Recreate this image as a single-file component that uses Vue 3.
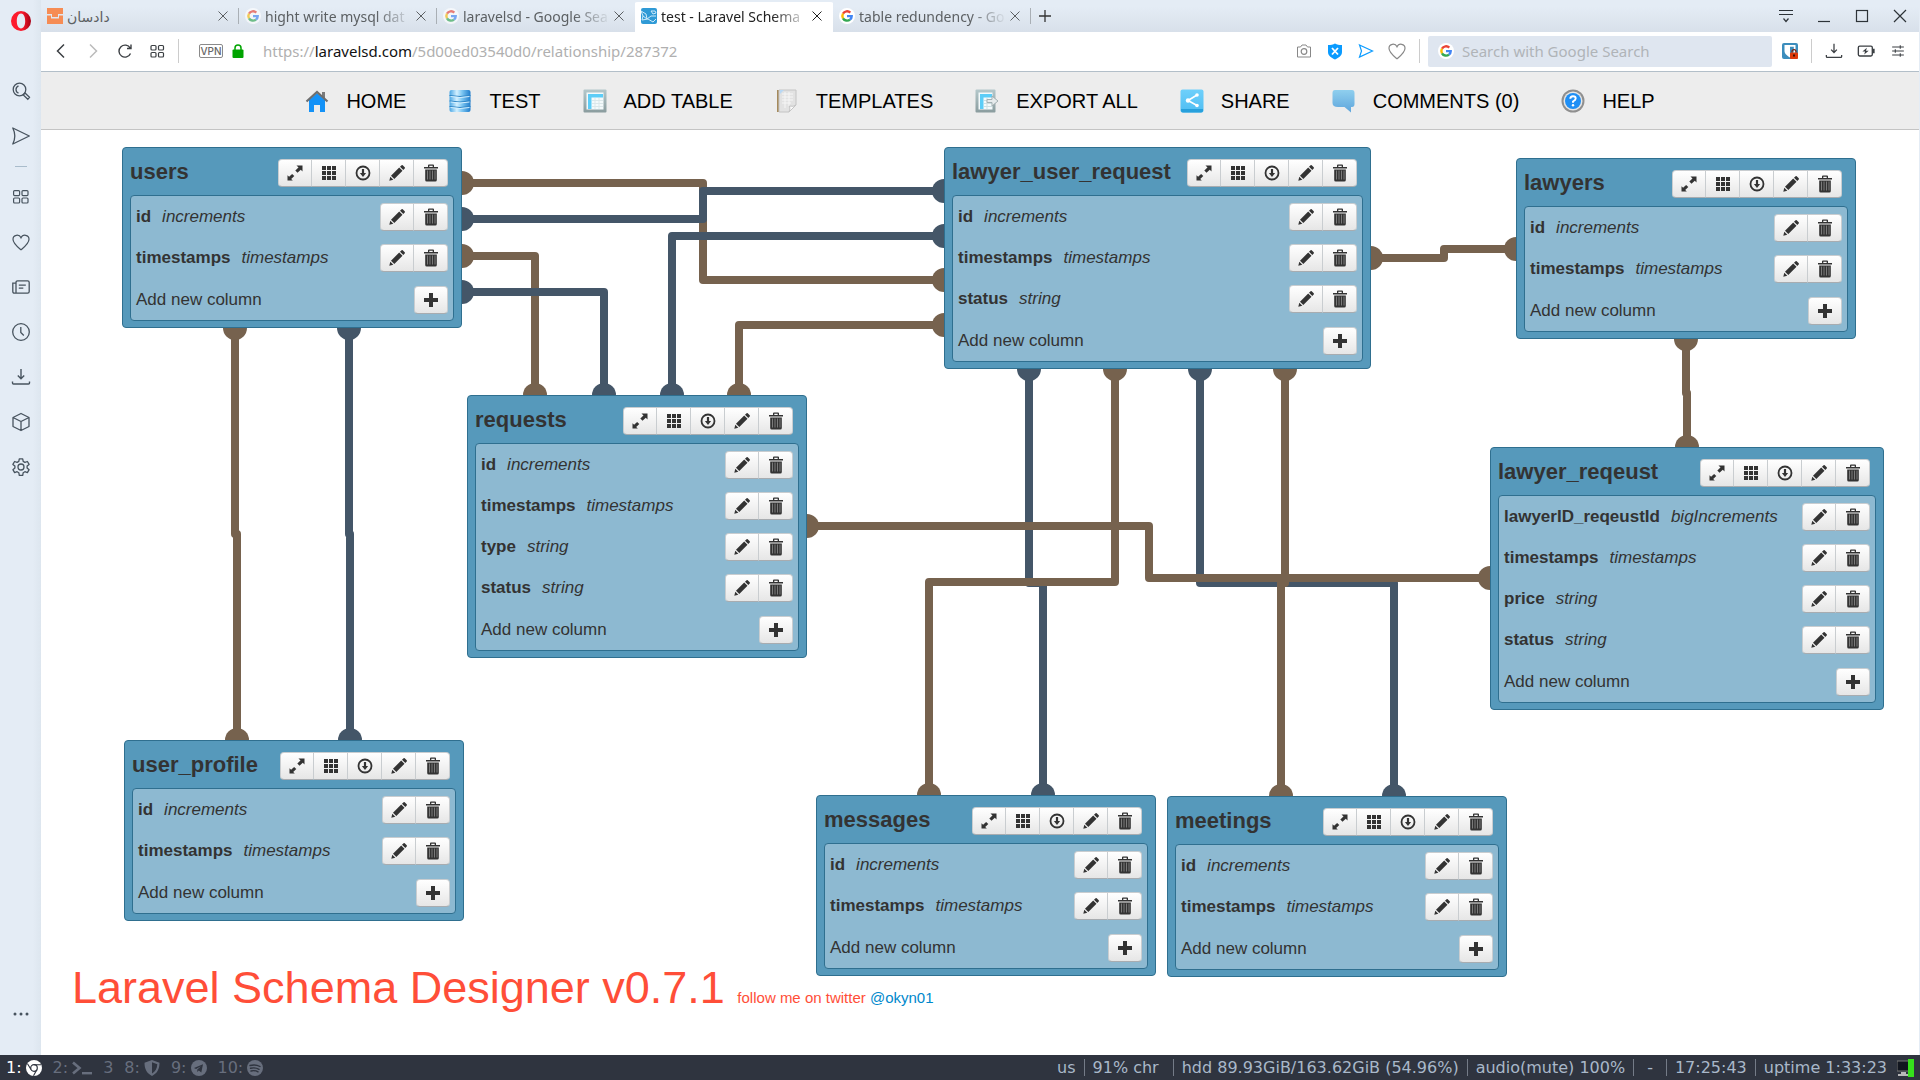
<script setup>
const tabs = [
  { title: 'دادسان', icon: 'brand' },
  { title: 'hight write mysql dat', icon: 'google' },
  { title: 'laravelsd - Google Sea', icon: 'google' },
  { title: 'test - Laravel Schema', icon: 'schema', active: true },
  { title: 'table redundency - Go', icon: 'google', bright: true },
]

const menu = [
  { label: 'HOME', icon: 'home' },
  { label: 'TEST', icon: 'database' },
  { label: 'ADD TABLE', icon: 'sheet' },
  { label: 'TEMPLATES', icon: 'template' },
  { label: 'EXPORT ALL', icon: 'export' },
  { label: 'SHARE', icon: 'share' },
  { label: 'COMMENTS (0)', icon: 'comment' },
  { label: 'HELP', icon: 'help' },
]

const sideTop = ['search', 'send']
const sideMain = ['tiles', 'heart', 'news', 'clock', 'download', 'cube', 'gear']

const id = { name: 'id', type: 'increments' }
const stamps = { name: 'timestamps', type: 'timestamps' }
const status = { name: 'status', type: 'string' }

const tables = [
  { name: 'users', x: 81, y: 17, w: 340, columns: [id, stamps] },
  { name: 'lawyer_user_request', x: 903, y: 17, w: 427, columns: [id, stamps, status] },
  { name: 'lawyers', x: 1475, y: 28, w: 340, columns: [id, stamps] },
  { name: 'requests', x: 426, y: 265, w: 340, columns: [id, stamps, { name: 'type', type: 'string' }, status] },
  {
    name: 'lawyer_reqeust', x: 1449, y: 317, w: 394,
    columns: [{ name: 'lawyerID_reqeustId', type: 'bigIncrements' }, stamps, { name: 'price', type: 'string' }, status],
  },
  { name: 'user_profile', x: 83, y: 610, w: 340, columns: [id, stamps] },
  { name: 'messages', x: 775, y: 665, w: 340, columns: [id, stamps] },
  { name: 'meetings', x: 1126, y: 666, w: 340, columns: [id, stamps] },
]

const BROWN = '#76624e'
const BLUE = '#445668'

const links = [
  { color: BROWN, points: [[421, 53], [662, 53], [662, 150], [903, 150]] },
  { color: BLUE, points: [[421, 89], [662, 89], [662, 61], [903, 61]] },
  { color: BROWN, points: [[421, 126], [494, 126], [494, 265]] },
  { color: BLUE, points: [[421, 162], [563, 162], [563, 265]] },
  { color: BLUE, points: [[903, 106], [631, 106], [631, 265]] },
  { color: BROWN, points: [[903, 195], [698, 195], [698, 265]] },
  { color: BROWN, points: [[194, 198], [194, 404], [196, 404], [196, 610]] },
  { color: BLUE, points: [[308, 198], [308, 404], [309, 404], [309, 610]] },
  { color: BROWN, points: [[1330, 128], [1403, 128], [1403, 119], [1475, 119]] },
  { color: BROWN, points: [[1645, 209], [1645, 263], [1646, 263], [1646, 317]] },
  { color: BLUE, points: [[988, 239], [988, 453], [1002, 453], [1002, 665]] },
  { color: BROWN, points: [[1074, 239], [1074, 452], [888, 452], [888, 665]] },
  { color: BLUE, points: [[1159, 239], [1159, 453], [1353, 453], [1353, 666]] },
  { color: BROWN, points: [[1244, 239], [1244, 453], [1240, 453], [1240, 666]] },
  { color: BROWN, points: [[766, 396], [1108, 396], [1108, 448], [1449, 448]] },
]

const workspaces = [
  { label: '1:', icon: 'chrome', active: true },
  { label: '2:', icon: 'prompt', wide: true },
  { label: '3' },
  { label: '8:', icon: 'shieldhalf' },
  { label: '9:', icon: 'telegram' },
  { label: '10:', icon: 'spotify' },
]

const stats = [
  { text: 'us' },
  { text: '91% chr', kind: 'battery' },
  { text: 'hdd 89.93GiB/163.62GiB (54.96%)' },
  { text: 'audio(mute) 100%' },
  { text: '-', kind: 'blank' },
  { text: '17:25:43' },
  { text: 'uptime 1:33:23' },
]
</script>

<template>
  <svg class="sprites" aria-hidden="true">
    <defs>
      <linearGradient id="g-blue" x1="0" y1="0" x2="1" y2="0">
        <stop offset="0" stop-color="#4aa6e4" /><stop offset=".35" stop-color="#d3f0ff" /><stop offset=".6" stop-color="#7cc6f2" /><stop offset="1" stop-color="#1f7ccb" />
      </linearGradient>
      <linearGradient id="g-frame" x1="0" y1="0" x2="0" y2="1">
        <stop offset="0" stop-color="#b4c8cb" /><stop offset="1" stop-color="#8a9c9e" />
      </linearGradient>
      <linearGradient id="g-share" x1="0" y1="0" x2="0" y2="1">
        <stop offset="0" stop-color="#6fd0fb" /><stop offset="1" stop-color="#4fbdf2" />
      </linearGradient>
      <linearGradient id="g-bubble" x1="0" y1="0" x2="0" y2="1">
        <stop offset="0" stop-color="#8fcfee" /><stop offset="1" stop-color="#5ea5dc" />
      </linearGradient>
      <linearGradient id="g-opera" x1="0" y1="0" x2="1" y2="0">
        <stop offset="0" stop-color="#ff1b2d" /><stop offset=".55" stop-color="#fa1a2c" /><stop offset="1" stop-color="#a70014" />
      </linearGradient>
    </defs>

    <symbol id="i-opera" viewBox="0 0 20 20">
      <path fill="url(#g-opera)" fill-rule="evenodd" d="M10 0a10 10 0 1 0 0 20a10 10 0 0 0 0-20zm0 2.600c2.600 0 4.200 3.200 4.200 7.400s-1.600 7.400-4.200 7.400S5.800 14.200 5.800 10 7.400 2.600 10 2.600z" />
    </symbol>
    <symbol id="i-brand" viewBox="0 0 16 16">
      <path fill="#f68c54" d="M0 0h16v6h-5v3H5V6H0zM0 7.500h4v3h8v-3h4V16H0z" />
    </symbol>
    <symbol id="i-google" viewBox="0 0 16 16">
      <circle cx="8" cy="8" r="8" fill="#fff" />
      <g fill="none" stroke-width="2.400">
        <path stroke="#ea4335" d="M4 5.700A4.700 4.700 0 0 1 11.300 4.600" />
        <path stroke="#fbbc05" d="M4 10.300A4.700 4.700 0 0 1 4 5.700" />
        <path stroke="#34a853" d="M11 11.600A4.700 4.700 0 0 1 4 10.300" />
        <path stroke="#4285f4" d="M8 8.100h4.700A4.700 4.700 0 0 1 11 11.600" />
      </g>
    </symbol>
    <symbol id="i-schema" viewBox="0 0 16 16">
      <rect width="16" height="16" rx="2" fill="#2f9ad6" />
      <path d="M0 3l2 5 4 3-1-5zM2 8l-1 4 6-1 5 3 3-3M6 11l4-3 5 0M10 3l2 3 3-1-1-2z" fill="none" stroke="#cfeafa" />
    </symbol>
    <symbol id="i-close" viewBox="0 0 12 12"><path d="M1.500 1.500l9 9M10.500 1.500l-9 9" fill="none" stroke="currentColor" /></symbol>
    <symbol id="i-plusthin" viewBox="0 0 12 12"><path d="M6 0v12M0 6h12" fill="none" stroke="currentColor" stroke-width="1.300" /></symbol>

    <symbol id="i-tabmenu" viewBox="0 0 20 20"><path d="M3 4.500h14M3 8.500h14M7.500 12.500l2.500 3 2.500-3" fill="none" stroke="currentColor" stroke-width="1.200" /></symbol>
    <symbol id="i-min" viewBox="0 0 20 20"><path d="M4 15.500h12" stroke="currentColor" stroke-width="1.200" /></symbol>
    <symbol id="i-max" viewBox="0 0 20 20"><rect x="4.500" y="4.500" width="11" height="11" fill="none" stroke="currentColor" stroke-width="1.200" /></symbol>
    <symbol id="i-winclose" viewBox="0 0 20 20"><path d="M4 4l12 12M16 4L4 16" stroke="currentColor" stroke-width="1.200" /></symbol>

    <symbol id="i-back" viewBox="0 0 20 20"><path d="M13 3.500L6.500 10l6.500 6.500" fill="none" stroke="currentColor" stroke-width="1.500" /></symbol>
    <symbol id="i-forward" viewBox="0 0 20 20"><path d="M7 3.500l6.500 6.500L7 16.500" fill="none" stroke="currentColor" stroke-width="1.500" /></symbol>
    <symbol id="i-reload" viewBox="0 0 20 20"><path d="M15.500 12.500a6 6 0 1 1-.3-5.400M16 3.500v4h-4" fill="none" stroke="currentColor" stroke-width="1.400" /></symbol>
    <symbol id="i-dial" viewBox="0 0 20 20">
      <g fill="none" stroke="currentColor" stroke-width="1.200">
        <rect x="4" y="4.500" width="5" height="4.500" rx="1" /><rect x="11.500" y="4.500" width="5" height="4.500" rx="1" />
        <rect x="4" y="11.500" width="5" height="4.500" rx="1" /><rect x="11.500" y="11.500" width="5" height="4.500" rx="1" />
      </g>
    </symbol>
    <symbol id="i-tiles" viewBox="0 0 20 20">
      <g fill="none" stroke="currentColor" stroke-width="1.200">
        <rect x="2.600" y="3.600" width="6" height="5" rx="1" /><rect x="11" y="3.600" width="6" height="5" rx="1" />
        <rect x="2.600" y="11" width="6" height="5" rx="1" /><rect x="11" y="11" width="6" height="5" rx="1" />
      </g>
    </symbol>
    <symbol id="i-lock" viewBox="0 0 12 14"><path d="M3 6V4a3 3 0 0 1 6 0v2" fill="none" stroke="#00a400" stroke-width="1.500" /><rect x=".5" y="5.500" width="11" height="8.500" rx="1" fill="#00a400" /></symbol>
    <symbol id="i-camera" viewBox="0 0 20 20"><path d="M3.500 6h3l1.500-2h4l1.500 2h3v10h-13z" fill="none" stroke="currentColor" /><circle cx="10" cy="10.500" r="2.800" fill="none" stroke="currentColor" stroke-width="1.200" /></symbol>
    <symbol id="i-blocker" viewBox="0 0 20 20"><path d="M10 2.500c2 1.500 4 1.500 7 1.500v7c0 4-4 6-7 7.500-3-1.500-7-3.500-7-7.500V4c3 0 5 0 7-1.500z" fill="#0a9bff" /><path d="M7 7l6 6.500M13 7l-6 6.500" stroke="#fff" stroke-width="1.800" /></symbol>
    <symbol id="i-flow" viewBox="0 0 20 20"><path d="M3.500 4L16.500 10 3.500 16l2-6z" fill="none" stroke="#0a9bff" stroke-width="1.200" /></symbol>
    <symbol id="i-heart" viewBox="0 0 20 20"><path d="M10 17.800C6 14.500 2 11.500 2 7.300 2 2.600 8.200 1.800 10 5.800c1.800-4 8-3.200 8 1.500 0 4.200-4 7.200-8 10.500z" fill="none" stroke="currentColor" stroke-width="1.200" /></symbol>
    <symbol id="i-vault" viewBox="0 0 16 16"><rect width="16" height="16" rx="2" fill="#3c8dbc" /><path d="M2.500 2h11v6c0 3-3 5-5.500 6.500C5.500 13 2.500 11 2.500 8z" fill="#fff" /><path d="M8 3.800h3.800V8c0 2-2 3.500-3.800 4.600z" fill="#3c8dbc" /><path d="M10 9.500V8.600a2 2 0 0 1 4 0v.9" fill="none" stroke="#7c1c04" stroke-width="1.200" /><rect x="8" y="9.500" width="8" height="6.500" rx="1" fill="#dd3a0b" /><rect x="11" y="11.500" width="2" height="2" fill="#401003" /></symbol>
    <symbol id="i-download" viewBox="0 0 20 20"><path d="M10 2v9.500M6.800 8.500L10 11.700l3.200-3.200M1.500 14.500v1.500q0 1 1 1h15q1 0 1-1v-1.500" fill="none" stroke="currentColor" stroke-width="1.400" /></symbol>
    <symbol id="i-battery" viewBox="0 0 20 20"><rect x="1.500" y="4.500" width="15.500" height="11" rx="1.500" fill="none" stroke="currentColor" stroke-width="1.500" /><path d="M18.500 7.500v5" stroke="currentColor" stroke-width="2.200" /><path d="M11 6.500L6 10.500h3L8 14l5-4.200h-3z" fill="currentColor" /></symbol>
    <symbol id="i-sliders" viewBox="0 0 20 20"><path d="M3.500 5.500h13M3.500 10h13M3.500 14.500h13M12.500 3.500v4M7 8v4M12.500 12.500v4" fill="none" stroke="currentColor" stroke-width="1.200" /></symbol>

    <symbol id="i-search" viewBox="0 0 20 20"><g fill="none" stroke="currentColor" stroke-width="1.300"><circle cx="8.500" cy="8.500" r="6.300" /><path d="M7.500 4.800a4 4 0 0 0 0 7.400M13 13l1-1 4.500 4.300-1.700 2L12.300 14z" /></g></symbol>
    <symbol id="i-send" viewBox="0 0 20 20"><path d="M1.800 2l16.500 8-16.500 8q4-8 0-16z" fill="none" stroke="currentColor" stroke-width="1.300" stroke-linejoin="round" /></symbol>
    <symbol id="i-news" viewBox="0 0 20 20"><path d="M5 16.200H3.400q-1.600 0-1.600-1.600V6.200H5m0 8V5.400q0-1.600 1.600-1.600h10q1.600 0 1.600 1.600v9.200q0 1.600-1.600 1.600H5zM7.800 8.200h7M7.800 11.200h4.500" fill="none" stroke="currentColor" stroke-width="1.300" /></symbol>
    <symbol id="i-clock" viewBox="0 0 20 20"><circle cx="10" cy="10" r="8.300" fill="none" stroke="currentColor" stroke-width="1.300" /><path d="M9.800 5v5.500l3 3" fill="none" stroke="currentColor" stroke-width="1.300" /></symbol>
    <symbol id="i-cube" viewBox="0 0 20 20"><path d="M10 1.500l8 4v9l-8 4-8-4v-9zM2 5.500l8 4 8-4M10 9.500v9" fill="none" stroke="currentColor" stroke-width="1.300" stroke-linejoin="round" /></symbol>
    <symbol id="i-gear" viewBox="0 0 20 20"><g fill="none" stroke="currentColor" stroke-width="1.300" stroke-linejoin="round"><circle cx="10" cy="10" r="3" /><path d="M8.300 1.800h3.400l.5 2.600 1.700 1 2.500-.9 1.700 2.900-2 1.700v1.900l2 1.700-1.700 2.900-2.500-.9-1.700 1-.5 2.600H8.300l-.5-2.600-1.700-1-2.500.9-1.700-2.900 2-1.700V9.100l-2-1.700 1.700-2.900 2.500.9 1.700-1z" /></g></symbol>
    <symbol id="i-more" viewBox="0 0 20 20"><circle cx="4" cy="11" r="1.500" fill="currentColor" /><circle cx="10" cy="11" r="1.500" fill="currentColor" /><circle cx="16" cy="11" r="1.500" fill="currentColor" /></symbol>

    <symbol id="i-home" viewBox="0 0 24 24">
      <path d="M17 3h3v6h-3z" fill="#7a7a7a" />
      <path d="M4 11l8-7 8 7v12h-5v-7H9v7H4z" fill="#1492f7" />
      <path d="M1.500 12.500L12 3l10.500 9.500" fill="none" stroke="#6e6e6e" stroke-width="2.200" />
    </symbol>
    <symbol id="i-database" viewBox="0 0 24 24">
      <path d="M1.500 3q0-2 2-2h17q2 0 2 2v18q0 2-2 2h-17q-2 0-2-2z" fill="url(#g-blue)" />
      <path d="M1.500 6.500q10.500 2 21 0M1.500 12q10.500 2 21 0M1.500 17.500q10.500 2 21 0" fill="none" stroke="#2f86c6" />
      <path d="M2.500 7.500q9.500 2 19 0M2.500 13q9.500 2 19 0M2.500 18.500q9.500 2 19 0" fill="none" stroke="#d3efff" />
    </symbol>
    <symbol id="i-sheet" viewBox="0 0 24 24">
      <rect x=".5" y=".5" width="23" height="23" rx="1" fill="url(#g-frame)" />
      <rect x="3.500" y="3.500" width="17" height="17" fill="#f4fafb" />
      <path d="M5 5h15v3.500H8.500V20H5z" fill="#5ccdf7" />
      <path d="M9 11.500h11M9 14.500h11M9 17.500h11M12 9v11M16 9v11" stroke="#dbe8ea" fill="none" />
    </symbol>
    <symbol id="i-template" viewBox="0 0 24 24">
      <path d="M2 1h2v22H2z" fill="#a58a5c" /><path d="M4 1h17v15l-7 7H4z" fill="#e2e2e2" stroke="#c4c4c4" />
      <path d="M7 5h11M7 8h11M7 11h11M7 14h9M10 3v16M14 3v14" stroke="#f6f6f6" fill="none" />
      <path d="M14 23q1.500-3 .5-6 4 1 6.500-1z" fill="#fafafa" stroke="#c4c4c4" /><path d="M5 5l4-4H5z" fill="#b9d8f3" />
    </symbol>
    <symbol id="i-export" viewBox="0 0 24 24">
      <rect x=".5" y=".5" width="20" height="23" rx="1" fill="url(#g-frame)" />
      <rect x="3.500" y="3.500" width="14" height="17" fill="#f4fafb" />
      <path d="M5 5h12v3.500H8.500V20H5z" fill="#5ccdf7" />
      <path d="M9 11.500h8M9 14.500h8M9 17.500h8M12 9v11" stroke="#cddfe2" fill="none" />
      <path d="M12 10.500h5V7l6 5-6 5v-3.500h-5z" fill="#e6ebec" stroke="#a3b0b2" />
    </symbol>
    <symbol id="i-share" viewBox="0 0 24 24">
      <rect x=".5" y=".5" width="23" height="23" rx="2" fill="url(#g-share)" /><path d="M1 20h22v1.500q0 2-2 2H3q-2 0-2-2z" fill="#27a0dc" />
      <path d="M17 6L8 11.500l9 5" fill="none" stroke="#fff" stroke-width="1.600" /><circle cx="17" cy="6" r="1.800" fill="#fff" /><circle cx="8" cy="11.500" r="2.200" fill="#fff" /><circle cx="17" cy="16.500" r="1.800" fill="#fff" />
    </symbol>
    <symbol id="i-comment" viewBox="0 0 24 24"><path d="M3 1h17q2.500 0 2.500 3v11q0 3-2.500 3h-1v5.500L12.500 18H6q-5.500 0-5.500-4V4q0-3 2.500-3z" fill="url(#g-bubble)" /></symbol>
    <symbol id="i-help" viewBox="0 0 24 24">
      <circle cx="12" cy="12" r="11.500" fill="#8f8f8f" /><circle cx="12" cy="12" r="9.500" fill="#e6e6e6" /><circle cx="12" cy="12" r="8" fill="#1f8ff5" />
      <path d="M9.300 9.800q0-2.600 2.700-2.600t2.700 2.300q0 1.500-2.700 3v1.200" fill="none" stroke="#fff" stroke-width="1.900" /><circle cx="12" cy="16.300" r="1.200" fill="#fff" />
    </symbol>

    <symbol id="i-resize" viewBox="0 0 16 16"><path d="M15.500.5v6l-1.700-1.700-3.300 3L8.300 5.600l3.200-3L9.500.5zM.5 15.500v-5.300l1.600 1.600 3-2.900 2.200 2.200-3.100 2.800 1.600 1.600z" /></symbol>
    <symbol id="i-grid" viewBox="0 0 16 16"><path d="M1 1h4v4H1zM6 1h4v4H6zM11 1h4v4h-4zM1 6h4v4H1zM6 6h4v4H6zM11 6h4v4h-4zM1 11h4v4H1zM6 11h4v4H6zM11 11h4v4h-4z" /></symbol>
    <symbol id="i-down" viewBox="0 0 16 16"><circle cx="8" cy="8" r="6.500" fill="none" stroke="#333" stroke-width="1.800" /><path d="M6.900 4h2.200v4h2L8 12 4.900 8h2z" /></symbol>
    <symbol id="i-pencil" viewBox="0 0 16 16"><path d="M.3 15.700l1-4 3 3zM2 10.700l8.200-8.200 3.300 3.300L5.300 14zM11 1.700L12.600.3q.6-.4 1.100 0l2 2q.5.600 0 1.200L14.300 5z" /></symbol>
    <symbol id="i-trash" viewBox="0 0 14 18"><path d="M0 3h4V1.200Q4 .5 5 .5h4q1 0 1 .7V3h4v1.400H0zM5.300 1.700V3h3.400V1.700zM1.200 5.500h11.600V16q0 1.500-1.500 1.500H2.700q-1.500 0-1.500-1.500z" /><path d="M3.500 6.500v9M6 6.500v9M8.500 6.500v9M11 6.500v9" stroke="#9a9a9a" stroke-width=".7" /></symbol>
    <symbol id="i-plus" viewBox="0 0 16 16"><path d="M6 1h4v5h5v4h-5v5H6v-5H1V6h5z" /></symbol>

    <symbol id="i-chrome" viewBox="0 0 16 16"><circle cx="8" cy="8" r="8" fill="currentColor" /><circle cx="8" cy="8" r="3.300" fill="none" stroke="#2f343f" stroke-width="1.200" /><path d="M8 4.700h7M5 9.500L1.500 3.800M10.800 9.800L7.500 15.800" fill="none" stroke="#2f343f" stroke-width="1.100" /></symbol>
    <symbol id="i-prompt" viewBox="0 0 20 16"><path d="M1 2.500l6.500 5.500L1 13.500" fill="none" stroke="currentColor" stroke-width="2.600" /><path d="M10 12h10v2.400H10z" fill="currentColor" /></symbol>
    <symbol id="i-shieldhalf" viewBox="0 0 16 16"><path fill="currentColor" fill-rule="evenodd" d="M8 0l7.500 2.800c0 6-2 10.500-7.500 13.200C2.500 13.300.5 8.800.5 2.800zM8 2.300v11.200c3.500-2 5-5 5.300-9.200z" /></symbol>
    <symbol id="i-telegram" viewBox="0 0 16 16"><circle cx="8" cy="8" r="8" fill="currentColor" /><path d="M3 8l9-3.800L10.300 12.500 7.800 10.600 6.300 12V9.500L10 6.300 5 9z" fill="#2f343f" /></symbol>
    <symbol id="i-spotify" viewBox="0 0 16 16"><circle cx="8" cy="8" r="8" fill="currentColor" /><path d="M3 5.500q5.500-1.500 10 1M3.500 8.300q4.800-1.200 8.500 1M4 11q4-1 7 .8" fill="none" stroke="#2f343f" stroke-width="1.400" stroke-linecap="round" /></symbol>
    <symbol id="i-tray" viewBox="0 0 18 18"><rect x="0" y="2" width="12" height="10" fill="#12161f" stroke="#777" /><path d="M4 13h5v2h3v2H1v-2h3z" fill="#b9b9b9" /><rect x="11" y="0" width="6" height="18" fill="#36e01c" /></symbol>
  </svg>

  <div class="screen">
    <div class="browser">
      <nav class="side" aria-label="Sidebar">
        <button class="plain logo" aria-label="Menu"><svg><use href="#i-opera" /></svg></button>
        <div class="side-group">
          <button v-for="s in sideTop" :key="s" class="plain" :aria-label="s"><svg><use :href="'#i-' + s" /></svg></button>
        </div>
        <hr class="side-rule" />
        <div class="side-group">
          <button v-for="s in sideMain" :key="s" class="plain" :aria-label="s"><svg><use :href="'#i-' + s" /></svg></button>
        </div>
        <button class="plain side-more" aria-label="More"><svg><use href="#i-more" /></svg></button>
      </nav>

      <div class="window">
        <header class="tabbar">
          <div v-for="t in tabs" :key="t.title" class="tab" :class="{ active: t.active, bright: t.bright }">
            <svg class="favicon"><use :href="'#i-' + t.icon" /></svg>
            <span class="tab-title">{{ t.title }}</span>
            <button class="plain tab-close" aria-label="Close tab"><svg><use href="#i-close" /></svg></button>
          </div>
          <button class="plain tab-new" aria-label="New tab"><svg><use href="#i-plusthin" /></svg></button>
          <div class="win-controls">
            <button v-for="c in ['tabmenu', 'min', 'max', 'winclose']" :key="c" class="plain" :aria-label="c"><svg><use :href="'#i-' + c" /></svg></button>
          </div>
        </header>

        <div class="toolbar">
          <div class="tools nav-tools">
            <button class="plain" aria-label="Back"><svg><use href="#i-back" /></svg></button>
            <button class="plain dim" aria-label="Forward"><svg><use href="#i-forward" /></svg></button>
            <button class="plain" aria-label="Reload"><svg><use href="#i-reload" /></svg></button>
            <button class="plain" aria-label="Speed dial"><svg><use href="#i-dial" /></svg></button>
          </div>
          <span class="rule"></span>
          <span class="vpn">VPN</span>
          <svg class="lock"><use href="#i-lock" /></svg>
          <div class="url">https://<b>laravelsd.com</b>/5d00ed03540d0/relationship/287372</div>
          <div class="tools page-tools">
            <button v-for="c in ['camera', 'blocker', 'flow', 'heart']" :key="c" class="plain" :aria-label="c"><svg><use :href="'#i-' + c" /></svg></button>
          </div>
          <span class="rule"></span>
          <label class="search">
            <svg><use href="#i-google" /></svg>
            <input type="text" placeholder="Search with Google Search" aria-label="Search with Google Search" />
          </label>
          <button class="plain vault" aria-label="Passwords"><svg><use href="#i-vault" /></svg></button>
          <span class="rule"></span>
          <div class="tools end-tools">
            <button v-for="c in ['download', 'battery', 'sliders']" :key="c" class="plain" :aria-label="c"><svg><use :href="'#i-' + c" /></svg></button>
          </div>
        </div>

        <nav class="menu" aria-label="Main menu">
          <a v-for="m in menu" :key="m.label" href="#"><svg><use :href="'#i-' + m.icon" /></svg>{{ m.label }}</a>
        </nav>

        <main class="canvas">
          <svg class="wires" aria-hidden="true">
            <g v-for="(l, i) in links" :key="i">
              <polyline :points="l.points.join(' ')" :stroke="l.color" />
              <circle :cx="l.points[0][0]" :cy="l.points[0][1]" r="12" :fill="l.color" />
              <circle :cx="l.points[l.points.length - 1][0]" :cy="l.points[l.points.length - 1][1]" r="12" :fill="l.color" />
            </g>
          </svg>

          <section
            v-for="t in tables"
            :key="t.name"
            class="entity"
            :style="{ left: t.x + 'px', top: t.y + 'px', width: t.w + 'px' }"
          >
            <header>
              <h2>{{ t.name }}</h2>
              <div class="btns">
                <button aria-label="Resize"><svg><use href="#i-resize" /></svg></button>
                <button aria-label="Grid"><svg><use href="#i-grid" /></svg></button>
                <button aria-label="Export"><svg><use href="#i-down" /></svg></button>
                <button aria-label="Edit"><svg><use href="#i-pencil" /></svg></button>
                <button aria-label="Delete"><svg class="tall"><use href="#i-trash" /></svg></button>
              </div>
            </header>
            <ul>
              <li v-for="c in t.columns" :key="c.name">
                <strong>{{ c.name }}</strong><em>{{ c.type }}</em>
                <div class="btns">
                  <button aria-label="Edit column"><svg><use href="#i-pencil" /></svg></button>
                  <button aria-label="Delete column"><svg class="tall"><use href="#i-trash" /></svg></button>
                </div>
              </li>
              <li class="add">
                <span>Add new column</span>
                <div class="btns"><button aria-label="Add column"><svg><use href="#i-plus" /></svg></button></div>
              </li>
            </ul>
          </section>

          <h1 class="brand">
            Laravel Schema Designer v0.7.1
            <small>follow me on twitter <a href="#">@okyn01</a></small>
          </h1>
        </main>
      </div>
    </div>

    <footer class="status">
      <div class="spaces">
        <span v-for="w in workspaces" :key="w.label" class="space" :class="{ active: w.active }">
          {{ w.label }}<svg v-if="w.icon" :class="{ wide: w.wide }"><use :href="'#i-' + w.icon" /></svg>
        </span>
      </div>
      <div class="stats">
        <span v-for="s in stats" :key="s.text" class="stat" :class="s.kind">{{ s.text }}</span>
        <svg class="tray"><use href="#i-tray" /></svg>
      </div>
    </footer>
  </div>
</template>

<style>
body {
  margin: 0;
  background: #fff;
}
</style>

<style scoped>
.sprites {
  position: absolute;
  width: 0;
  height: 0;
}
.screen {
  display: flex;
  flex-direction: column;
  min-height: 100vh;
  font-family: "Liberation Sans", Arial, sans-serif;
}
.browser {
  flex: 1;
  display: flex;
  background: #e4ecf5;
}
.plain {
  display: block;
  width: 20px;
  height: 20px;
  padding: 0;
  border: 0;
  background: none;
  color: inherit;
}
.plain svg {
  display: block;
  width: 100%;
  height: 100%;
}

/* sidebar */
.side {
  width: 41px;
  box-sizing: border-box;
  display: flex;
  flex-direction: column;
  align-items: center;
  padding: 11px 0 32px;
  color: #47535e;
  background: linear-gradient(to right, #e4ecf5 80%, #dde6ef);
}
.logo {
  margin-bottom: 50px;
}
.side-group {
  display: flex;
  flex-direction: column;
  gap: 25px;
}
.side-rule {
  width: 12px;
  height: 1px;
  margin: 20px 0;
  border: 0;
  background: #a9bccb;
}
.side-more {
  margin-top: auto;
}

.window {
  flex: 1;
  min-width: 0;
  display: flex;
  flex-direction: column;
  padding-right: 1px;
}

/* tabs */
.tabbar {
  height: 32px;
  display: flex;
  align-items: stretch;
  background: linear-gradient(#e4ecf5 20%, #d8e0ea);
  font: 14px "Noto Sans", "DejaVu Sans", sans-serif;
  color: #5c6063;
}
.tab {
  width: 198px;
  box-sizing: border-box;
  display: flex;
  align-items: center;
  padding: 0 8px 0 6px;
  background: linear-gradient(#a9afb5, #a9afb5) right center / 1px 16px no-repeat;
}
.tab:nth-child(3) {
  background: none;
}
.tab.active {
  padding-bottom: 2px;
  border-top: 2px solid #e4ecf5;
  border-radius: 3px 3px 0 0;
  background: #fff;
  color: #222;
}
.favicon {
  width: 16px;
  height: 16px;
  flex: none;
  margin-right: 4px;
  opacity: 0.65;
}
.tab:first-child .favicon,
.tab.active .favicon,
.tab.bright .favicon {
  opacity: 1;
}
.tab-title {
  flex: 1;
  white-space: nowrap;
  margin-right: 2px;
  mask-image: linear-gradient(to right, #000 75%, transparent);
}
.tab:first-child .tab-title {
  mask-image: none;
}
.tab-close {
  width: 12px;
  height: 12px;
  margin-right: 2px;
}
.tab-new {
  width: 12px;
  height: 12px;
  margin: 10px 0 0 8px;
  color: #333;
}
.win-controls {
  margin: 6px 9px 0 auto;
  display: flex;
  gap: 18px;
  color: #2d3338;
}

/* address bar */
.toolbar {
  height: 40px;
  box-sizing: border-box;
  display: flex;
  align-items: center;
  background: #fff;
  border-bottom: 1px solid #b3bfc9;
  color: #3b3f43;
  padding: 0 11px 1px 10px;
}
.tools {
  display: flex;
  gap: 12px;
}
.rule {
  width: 1px;
  height: 24px;
  background: #ccc;
}
.nav-tools {
  margin-right: 11px;
}
.dim {
  color: #bbb;
}
.vpn {
  margin: 0 9px 0 20px;
  width: 22px;
  height: 12px;
  border: 1px solid #8a8a8a;
  border-radius: 2px;
  color: #666;
  font: 500 10px/12px Inter, sans-serif;
  text-align: center;
}
.lock {
  width: 12px;
  height: 14px;
}
.url {
  flex: 1;
  min-width: 0;
  margin-left: 19px;
  white-space: nowrap;
  font: 15px/20px "Noto Sans", sans-serif;
  color: #b0b0b0;
}
.url b {
  font-weight: 400;
  color: #111;
}
.page-tools {
  gap: 11px;
  margin-right: 12px;
  color: #888;
}
.search {
  width: 344px;
  height: 31px;
  box-sizing: border-box;
  margin: 0 10px 0 8px;
  padding-left: 10px;
  display: flex;
  align-items: center;
  gap: 8px;
  border-radius: 2px;
  background: #dfe6f0;
}
.search svg {
  width: 16px;
  height: 16px;
}
.search input {
  flex: 1;
  min-width: 0;
  padding: 0;
  border: 0;
  outline: 0;
  background: none;
  font: 15px "Noto Sans", sans-serif;
  color: #222;
}
.search input::placeholder {
  color: #b0b4b8;
  opacity: 1;
}
.vault {
  width: 16px;
  height: 16px;
  margin-right: 13px;
}
.end-tools {
  margin-left: 12px;
}
.end-tools svg {
  width: 18px;
  margin: 0 1px;
}

/* page menu */
.menu {
  height: 58px;
  box-sizing: border-box;
  display: flex;
  align-items: center;
  justify-content: center;
  gap: 42px;
  border-bottom: 1px solid #c4c4c4;
  background: #ededed;
}
.menu a {
  display: flex;
  align-items: center;
  gap: 17px;
  white-space: nowrap;
  font-size: 20px;
  line-height: 24px;
  color: #000;
  text-decoration: none;
}
.menu svg {
  width: 24px;
  height: 24px;
}

/* schema canvas */
.canvas {
  flex: 1;
  position: relative;
  min-height: 900px;
  display: flex;
  align-items: flex-end;
  overflow: hidden;
  background: #fff;
}
.wires {
  position: absolute;
  inset: 0;
  width: 100%;
  height: 100%;
}
.wires polyline {
  fill: none;
  stroke-width: 8px;
  stroke-linejoin: round;
}
.entity {
  position: absolute;
  box-sizing: border-box;
  padding: 0 7px 6px;
  border: 1px solid #2f6f8f;
  border-radius: 4px;
  background: #5699bb;
  color: #333;
}
.entity header {
  height: 47px;
  box-sizing: border-box;
  display: flex;
  justify-content: space-between;
  align-items: flex-start;
  padding: 11px 6px 0 0;
}
.entity h2 {
  margin: 0;
  font-size: 22px;
  line-height: 26px;
}
.entity ul {
  list-style: none;
  margin: 0;
  padding: 1px 5px 0;
  border: 1px solid #2f6f8f;
  border-radius: 4px;
  background: #8db9d1;
}
.entity li {
  height: 41px;
  box-sizing: border-box;
  padding-top: 6px;
  display: flex;
  align-items: flex-start;
  gap: 11px;
  font-size: 17px;
  line-height: 28px;
}
.entity li.add {
  padding-top: 7px;
}
.btns {
  display: flex;
  margin-left: auto;
}
.btns button {
  width: 34px;
  height: 28px;
  padding: 0;
  display: flex;
  align-items: center;
  justify-content: center;
  border: solid #c9cdd0;
  border-width: 1px 1px 1px 0;
  border-bottom-color: #a8acb0;
  background: linear-gradient(#fff, #e6e6e6);
  color: #333;
}
.btns button:first-child {
  border-left-width: 1px;
  border-radius: 4px 0 0 4px;
}
.btns button:last-child {
  border-radius: 0 4px 4px 0;
}
.btns button:only-child {
  border-radius: 4px;
}
.btns svg {
  width: 16px;
  height: 16px;
  fill: #333;
}
.btns svg.tall {
  width: 14px;
  height: 18px;
}
.brand {
  margin: 0 0 30px 31px;
  font-size: 45px;
  line-height: 54px;
  font-weight: 400;
  color: #ff4e38;
}
.brand small {
  font-size: 15px;
}
.brand a {
  color: #0088cc;
  text-decoration: none;
}

/* status bar */
.status {
  height: 25px;
  display: flex;
  justify-content: space-between;
  align-items: center;
  padding: 0 5px 0 6px;
  background: #2f343f;
  font: 16px/24px "DejaVu Sans", sans-serif;
  color: #a9b8c9;
}
.spaces,
.space,
.stats {
  display: flex;
  align-items: center;
}
.spaces {
  gap: 11px;
  color: #676e7d;
}
.space {
  gap: 4px;
}
.space.active {
  color: #fff;
}
.space svg {
  width: 16px;
  height: 16px;
}
.space svg.wide {
  width: 20px;
}
.stat {
  padding: 0 8px;
  line-height: 17px;
  white-space: nowrap;
  border-left: 1px solid #747b87;
}
.stat:first-child {
  border-left: 0;
}
.stat.battery {
  padding-right: 14px;
}
.stat.blank {
  padding: 0 13px;
}
.tray {
  width: 18px;
  height: 18px;
  margin-left: 2px;
}
</style>
